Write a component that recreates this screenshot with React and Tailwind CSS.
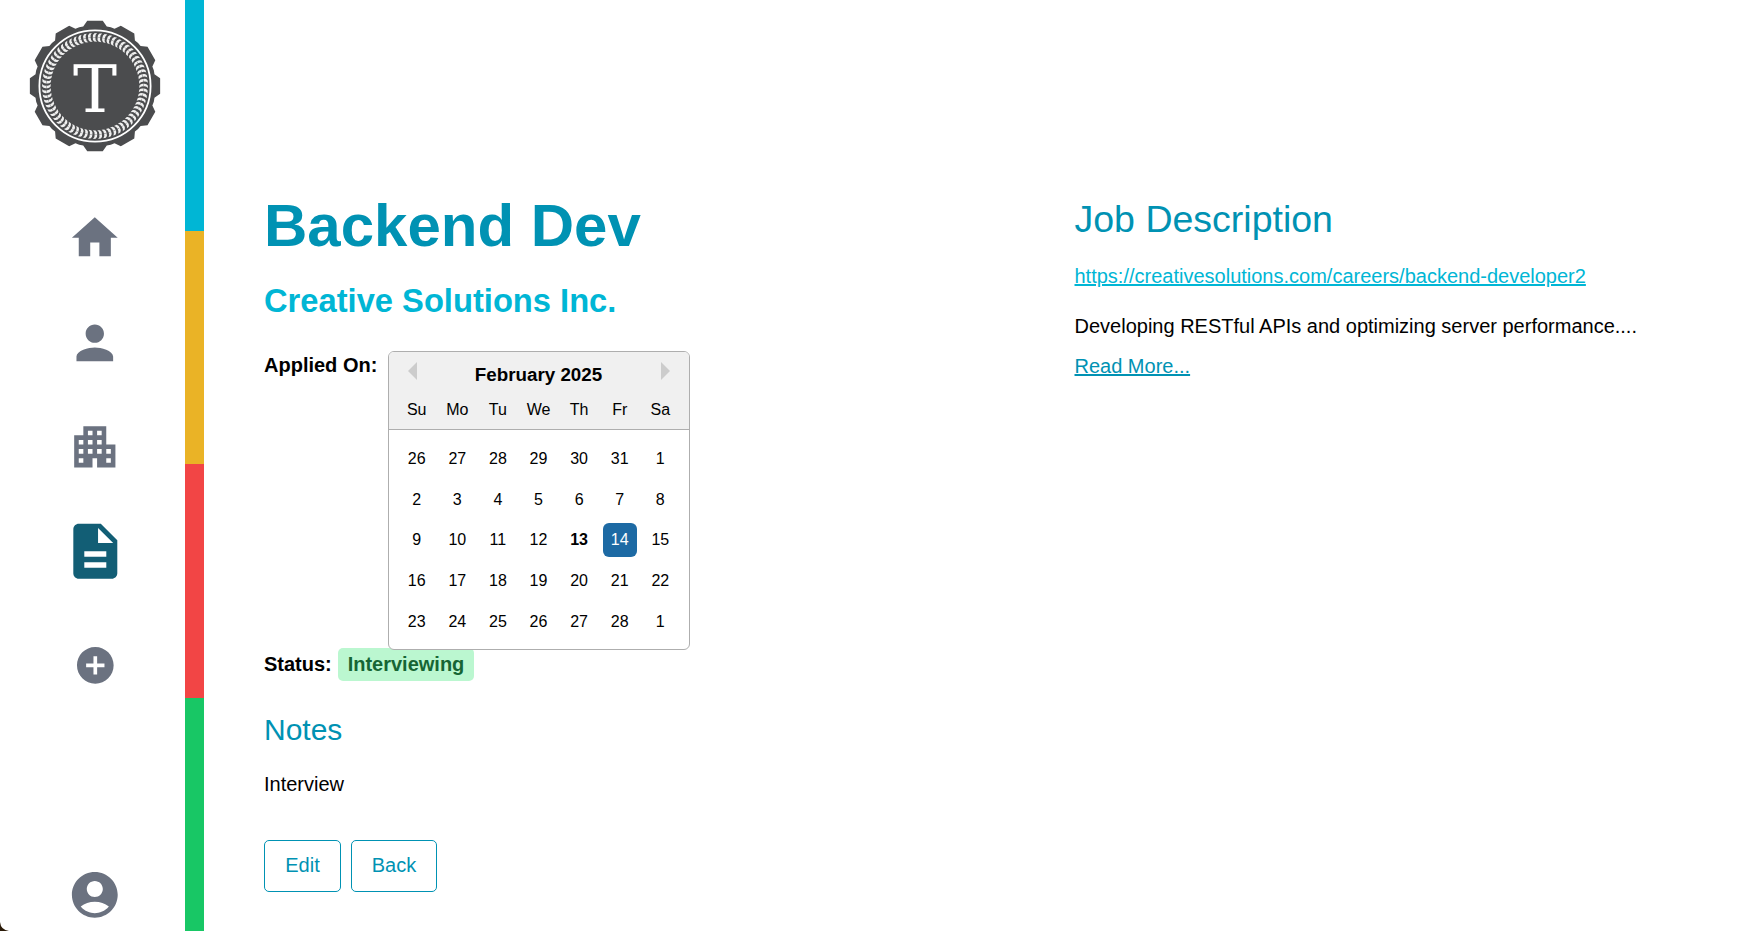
import React from "react";
import { MdHome, MdPerson, MdApartment, MdDescription, MdAddCircle } from "react-icons/md";

const point = (r, deg) => {
  const a = (deg * Math.PI) / 180;
  return `${(66 + r * Math.sin(a)).toFixed(2)},${(66 - r * Math.cos(a)).toFixed(2)}`;
};

const gear = Array.from({ length: 12 }, (_, i) => {
  const a = i * 30;
  return [point(60.6, a - 11.2), point(65.6, a - 6.8), point(65.6, a + 6.8), point(60.6, a + 11.2), point(60.9, a + 15)].join(" ");
}).join(" ");

function Logo() {
  return (
    <svg className="size-[132px] shrink-0" viewBox="0 0 132 132">
      <polygon points={gear} fill="#4b4c4e" />
      <circle cx="66" cy="66" r="55.6" fill="none" stroke="#fff" strokeWidth="1.8" />
      {Array.from({ length: 64 }, (_, i) => (
        <g key={i} fill="#efefef" transform={`rotate(${i * 5.625} 66 66)`}>
          <path d="M68 13 L65.4 13.2 Q63.4 14.6 63.8 17.4 L66.4 17.2 Q66 14.8 68 13z" />
          <path d="M68 21.8 L65.4 21.6 Q63.4 20.2 63.8 17.4 L66.4 17.6 Q66 20 68 21.8z" />
        </g>
      ))}
      <text x="66" y="91.7" textAnchor="middle" fontFamily="DejaVu Serif, serif" fontSize="66" fill="#fff">
        T
      </text>
    </svg>
  );
}

function AccountIcon() {
  return (
    <svg className="size-[55px]" viewBox="0 0 24 24" fill="currentColor">
      <path d="M12 2C6.48 2 2 6.48 2 12s4.48 10 10 10 10-4.48 10-10S17.52 2 12 2zm0 4c1.93 0 3.5 1.57 3.5 3.5S13.93 13 12 13s-3.5-1.57-3.5-3.5S10.07 6 12 6zm0 14c-2.03 0-4.43-.82-6.14-2.88C7.55 15.8 9.68 15 12 15s4.45.8 6.14 2.12C16.43 19.18 14.03 20 12 20z" />
    </svg>
  );
}

function Sidebar() {
  return (
    <aside className="flex h-full w-[185px] shrink-0 flex-col items-center pl-[4px] pt-5 text-[#6b7280]">
      <Logo />
      <nav className="mt-[58px] flex translate-x-[0.3px] translate-y-[0.3px] flex-col items-center">
        <MdHome className="size-[55px]" />
        <MdPerson className="mt-[50px] size-[55px]" />
        <MdApartment className="mt-[49px] size-[55px]" />
        <MdDescription className="mt-[44px] size-[66px] text-[#125e75]" />
        <MdAddCircle className="mt-[59px] size-[44px]" />
      </nav>
      <div className="mb-[9px] mt-auto translate-x-[0.3px] translate-y-[0.3px]">
        <AccountIcon />
      </div>
    </aside>
  );
}

function Stripes() {
  return (
    <div className="flex h-full w-[19px] shrink-0 flex-col">
      <div className="h-[231px] bg-[#00b6d5]" />
      <div className="h-[233px] bg-[#eab326]" />
      <div className="h-[234px] bg-[#f24545]" />
      <div className="grow bg-[#18c765]" />
    </div>
  );
}

const dayNames = ["Su", "Mo", "Tu", "We", "Th", "Fr", "Sa"];
const weeks = [
  [26, 27, 28, 29, 30, 31, 1],
  [2, 3, 4, 5, 6, 7, 8],
  [9, 10, 11, 12, 13, 14, 15],
  [16, 17, 18, 19, 20, 21, 22],
  [23, 24, 25, 26, 27, 28, 1],
];

function dayStyle(day) {
  if (day === 14) return "rounded-[6px] bg-[#1d6aa4] text-white";
  if (day === 13) return "font-bold";
  return "";
}

function Calendar() {
  return (
    <div className="relative z-10 w-[302px] rounded-[6px] border border-[#aeaeae] bg-white text-[16px] leading-[34px] text-black">
      <div className="rounded-t-[5px] border-b border-[#aeaeae] bg-[#f0f0f0] pt-2">
        <div className="flex items-start justify-between px-[19px]">
          <svg className="mt-[2px] h-[18px] w-[9px]" viewBox="0 0 9 18">
            <path d="M9 0v18L0 9z" fill="#ccc" />
          </svg>
          <div className="h-[30px] text-[18.8px] font-bold leading-[30px]">February 2025</div>
          <svg className="mt-[2px] h-[18px] w-[9px]" viewBox="0 0 9 18">
            <path d="M0 0v18l9-9z" fill="#ccc" />
          </svg>
        </div>
        <div className="flex justify-center pb-[2px] pt-[3px]">
          {dayNames.map((name) => (
            <div key={name} className="mx-[3.3px] w-[34px] text-center">
              {name}
            </div>
          ))}
        </div>
      </div>
      <div className="mb-[7px] mt-[9px]">
        {weeks.map((week, w) => (
          <div key={w} className="flex justify-center py-[3.3px]">
            {week.map((day, d) => (
              <div key={d} className={`mx-[3.3px] w-[34px] text-center ${dayStyle(day)}`}>
                {day}
              </div>
            ))}
          </div>
        ))}
      </div>
    </div>
  );
}

function JobDetails() {
  return (
    <section className="flex w-[810.5px] shrink-0 flex-col items-start">
      <h1 className="text-[60px] font-bold leading-[60px] text-[#0092b3]">Backend Dev</h1>
      <h2 className="mt-[22px] text-[32.7px] font-bold leading-[45px] text-[#00b6d5]">Creative Solutions Inc.</h2>
      <div className="mt-[27px] flex h-[299px] items-start">
        <span className="w-[123.5px] font-bold">Applied On:</span>
        <div className="mt-[1px]">
          <Calendar />
        </div>
      </div>
      <div className="-mt-[1px] flex h-[33px] items-start">
        <span className="w-[74px] pt-px font-bold">Status:</span>
        <span className="h-[33px] w-[136px] rounded-[5px] bg-[#bbf7d0] pt-px text-center font-bold text-[#166534]">Interviewing</span>
      </div>
      <h3 className="mt-[29px] text-[30px] leading-[40px] text-[#0092b3]">Notes</h3>
      <p className="mt-[19px]">Interview</p>
      <div className="mt-[41px] flex gap-[10px] text-[#0092b3]">
        <button className="h-[52px] w-[77px] rounded-[5px] border border-[#0092b3] pb-[2px]">Edit</button>
        <button className="h-[52px] w-[86px] rounded-[5px] border border-[#0092b3] pb-[2px]">Back</button>
      </div>
    </section>
  );
}

function JobDescription() {
  return (
    <section className="flex flex-col items-start">
      <h2 className="pt-px text-[37.5px] leading-[45px] text-[#0092b3]">Job Description</h2>
      <a className="mt-[19px] text-[#00b6d5] underline decoration-2">https://creativesolutions.com/careers/backend-developer2</a>
      <p className="mt-5">Developing RESTful APIs and optimizing server performance....</p>
      <a className="mt-[10px] text-[#0092b3] underline decoration-2">Read More...</a>
    </section>
  );
}

export default function App() {
  return (
    <div className="relative flex h-[931px] w-[1759px] overflow-hidden bg-white font-['Liberation_Sans',Arial,sans-serif] text-[20px] leading-[30px] text-black">
      <Sidebar />
      <Stripes />
      <main className="flex grow pl-[60px] pt-[196px]">
        <JobDetails />
        <JobDescription />
      </main>
      <svg className="absolute bottom-0 left-0 size-[9px]" viewBox="0 0 10 10">
        <path d="M0 0Q1 9 10 10H0z" fill="#2a1a08" />
      </svg>
    </div>
  );
}
